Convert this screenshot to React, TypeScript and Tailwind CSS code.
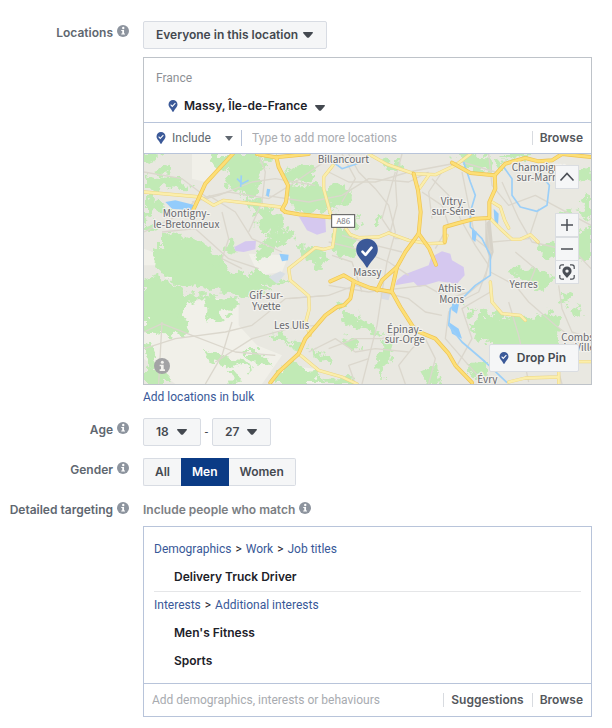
import { useState } from "react";
import type { ReactNode } from "react";

const FONT = "font-['Roboto','Liberation_Sans',sans-serif] [&_.font-semibold]:font-['Inter','Liberation_Sans',sans-serif]";

function InfoIcon() {
  return (
    <svg viewBox="0 0 24 24" className="mb-1 size-3 shrink-0" aria-hidden="true">
      <circle cx="12" cy="12" r="12" fill="#8d949e" />
      <circle cx="12.5" cy="6" r="2.4" fill="#fff" />
      <path d="M8.5 10h5.6v7H16v2H8.500v-2h2v-5h-2z" fill="#fff" />
    </svg>
  );
}

function Caret({ className = "" }: { className?: string }) {
  return (
    <svg viewBox="0 0 10 6" className={`h-1.5 w-2.5 shrink-0 ${className}`} aria-hidden="true">
      <path d="M.6 0h8.800q.6.1.5.9L6 5.400q-1 .9-2 0L.1.9Q0 .1.6 0z" fill="#444950" />
    </svg>
  );
}

function PinIcon({ className }: { className: string }) {
  return (
    <svg viewBox="0 0 22 29" className={`shrink-0 ${className}`} aria-hidden="true">
      <path
        d="M11 0a10.800 10.800 0 0 1 10.800 10.800c0 3.200-1.600 6-3.800 8.600-2.300 2.800-4.200 5.500-5.500 8.300-.7 1.400-2.300 1.400-3 0-1.300-2.800-3.200-5.500-5.500-8.300C1.800 16.800.2 14 .2 10.800A10.800 10.800 0 0 1 11 0z"
        fill="#3b5998"
      />
      <path d="M6.200 12.200l3 3.200 6.600-6.800" fill="none" stroke="#fff" strokeWidth="2.600" strokeLinecap="square" />
    </svg>
  );
}

function DropDown({ id, label, options, className }: { id: string; label?: string; options: string[]; className: string }) {
  return (
    <span className="relative inline-flex items-center">
      <select
        id={id}
        aria-label={label}
        className={`h-7 appearance-none rounded-xs border border-[#d8dce3] bg-[#f5f6f7] pl-3 text-xs font-semibold text-[#444950] ${className}`}
      >
        {options.map((o) => (
          <option key={o}>{o}</option>
        ))}
      </select>
      <Caret className="pointer-events-none absolute right-3.5" />
    </span>
  );
}

function Row({ label, htmlFor, children }: { label: string; htmlFor: string; children: ReactNode }) {
  return (
    <div className="flex gap-3.5">
      <div className="flex h-5 w-[129px] shrink-0 items-center justify-end gap-1 pt-1">
        <label htmlFor={htmlFor} className="whitespace-nowrap font-semibold text-[#606770]">
          {label}
        </label>
        <InfoIcon />
      </div>
      <div className="min-w-0 flex-1">{children}</div>
    </div>
  );
}

const WOODS = [
  "M210 6L345 6 365 40 350 80 345 120 300 130 250 105 240 70 270 55 225 50z",
  "M6 80L40 68 90 72 150 95 140 112 60 108 6 112z",
  "M6 132L40 140 60 160 120 185 90 190 40 180 6 205z",
  "M6 205L40 215 50 232 30 248 6 240z",
  "M60 255L100 240 150 262 200 285 240 310 250 345 220 360 160 345 100 325 60 290z",
  "M40 285L90 300 140 330 240 345 330 385 400 420 330 425 300 440 250 420 180 410 110 400 60 365 36 345z",
  "M6 385L50 375 90 395 150 430 230 430 300 450 270 480 230 490 235 510 190 500 190 440 140 450 125 510 60 490 6 460z",
  "M6 455L70 480 120 500 135 530 90 560 60 540 6 545z",
  "M60 540L90 560 110 520 145 530 120 555z",
  "M6 640L60 655 90 690 95 696 6 696z",
  "M6 575L20 560 50 640 20 650z",
  "M300 130L345 140 400 185 405 225 350 240 350 200z",
  "M310 6L400 6 385 24 330 22z",
  "M420 60L500 40 530 65 490 95 450 85z",
  "M440 90L470 100 540 100 565 165 530 190 480 180 440 165z",
  "M540 115L590 95 632 115 632 150 575 170z",
  "M575 225L620 235 650 290 635 320 590 315 565 275z",
  "M370 175L420 185 425 225 390 240 365 215z",
  "M390 250L450 235 470 250 420 275 380 285z",
  "M470 285L540 290 560 330 530 345 480 320z",
  "M340 305L385 260 410 270 375 315 345 325z",
  "M250 268L280 260 280 300 255 295z",
  "M370 240L440 228 440 242 380 262z",
  "M330 350L440 385 430 395 350 400 320 385z",
  "M715 25L790 30 785 52 740 55z",
  "M6 6L55 6 40 25 6 36z",
  "M40 50L80 38 90 55 60 66z",
  "M595 490L650 485 645 500 700 520 715 555 660 530 600 510z",
  "M580 450L600 440 610 470 585 475z",
  "M590 550L625 555 655 580 630 600z",
  "M500 595L530 590 570 630 560 640 520 610z",
  "M395 665L450 625 500 645 540 680 560 696 400 696z",
  "M540 675L620 672 640 696 560 696z",
  "M1080 6L1170 6 1170 18 1100 26z",
  "M990 515L1050 480 1080 490 1140 500 1190 500 1210 475 1250 500 1240 560 1250 600 1080 600 1050 575 1000 560z",
  "M1100 355L1180 345 1230 370 1200 410 1130 390z",
  "M1280 240L1347 225 1347 325 1300 330z",
  "M1310 150L1347 130 1347 200 1320 180z",
  "M1190 275L1240 275 1235 315 1200 310z",
  "M1250 180L1290 170 1300 190 1260 215z",
  "M830 660L880 635 900 690 850 696z",
  "M970 650L1030 620 1040 670 1000 680z",
  "M940 6L1040 10 1050 50 1000 62 960 45z",
  "M1060 20L1085 25 1080 60 1065 50z",
  "M1270 45L1347 50 1347 85 1310 85z",
  "M620 260L640 270 640 300 620 290z",
  "M625 200L650 195 660 215 640 225z",
  "M1250 430L1290 415 1300 440 1265 455z",
  "M1290 470L1310 450 1320 480 1300 500z",
  "M300 600L350 600 390 640 350 635z",
  "M180 600L240 605 330 635 340 650 270 640 200 625z",
  "M450 565L485 570 480 590 450 585z",
  "M720 560L760 550 750 600 735 640 720 690 710 640z",
  "M1020 480L1035 470 1050 490 1020 500z",
  "M395 540L450 560 440 575 400 560z",
  "M970 460L1000 470 985 490z",
  "M690 195L705 190 720 210 700 225z",
  "M250 660L290 665 300 685 270 696z",
];

const FIELDS = [
  "M150 6L300 6 190 90 150 80z",
  "M6 290L60 310 50 340 6 340z",
  "M320 305L440 310 420 360 350 370z",
  "M6 470L200 440 290 440 290 520 345 580 420 610 360 696 100 696 6 620z",
  "M60 340L130 350 110 380 70 380z",
  "M420 640L520 650 540 696 400 690z",
];

const MINOR = [
  "M6 240L90 200 170 140 260 120 380 140 460 90 560 20",
  "M150 150L230 130 330 90 400 80 520 100",
  "M200 130L280 180 330 260 420 300",
  "M60 240L160 230 260 320 350 350",
  "M6 60L120 80 200 140",
  "M350 6L370 60 360 150 320 240",
  "M240 180L260 260 240 320 300 350",
  "M370 130L500 150 600 130 680 80 800 90 860 60",
  "M620 6L650 60 700 110 740 160 760 240 735 330 720 420 705 520 660 696",
  "M560 60L620 90 700 90 800 60",
  "M600 6L640 80 600 150",
  "M760 60L740 130 720 200 760 260 800 260",
  "M780 6L760 80 765 160 745 240",
  "M700 20L800 60 960 30 1060 60",
  "M870 80L920 130 960 210 1000 280 1040 340 1010 420 950 450",
  "M840 120L900 160 920 220 880 290",
  "M960 60L980 160 1000 260 1050 300",
  "M1030 200L1045 300 1030 380 960 440 920 480 910 560 980 640 1030 696",
  "M1040 6L1050 100 1100 160 1180 130 1347 220",
  "M1080 90L1130 200 1170 270 1300 300 1347 350",
  "M1190 170L1160 260 1050 270",
  "M1045 360L1120 400 1160 450 1240 520 1347 600",
  "M1045 420L960 470 990 560 940 650",
  "M560 400L680 420 850 400 920 440 980 420",
  "M720 420L800 440 850 480 900 490",
  "M440 440L560 430 640 400 720 420",
  "M6 590L100 560 250 540 330 520 430 440 560 430",
  "M60 510L50 696",
  "M6 540L60 515 150 550 280 600 400 610",
  "M220 630L330 560 440 530 520 520",
  "M190 696L240 610 270 510",
  "M560 590L640 560 720 560 820 520",
  "M500 600L580 560 640 600 700 590 800 600",
  "M790 696L770 640 810 590 850 550",
  "M640 696L620 640 680 620",
  "M850 560L880 620 860 696",
  "M560 270L640 290 740 330 800 370",
  "M570 310L630 330 660 420",
  "M600 250L700 280 780 300",
  "M1100 450L1130 550 1160 690",
  "M1250 400L1260 470 1290 540 1347 560",
  "M900 60L860 120 870 200",
  "M1120 300L1180 350 1160 400",
  "M1250 660L1260 696",
];

const YELLOW = [
  "M6 120L175 135 215 160 245 145 415 165 430 178",
  "M573 40L545 75 545 110 568 195",
  "M580 225L572 285 545 292 520 287 440 350 445 385 500 432 502 470 490 515 505 550",
  "M612 230L625 248 650 257 710 255 740 243",
  "M680 6L735 37 815 65 880 68 940 40 985 6",
  "M860 70L832 110",
  "M740 243L800 265 860 275 908 273 915 250",
  "M1047 148L1075 165 1088 205 1100 228",
  "M1045 200L1075 230 1110 262 1135 262 1165 248 1188 270",
  "M1045 390L1050 450 1080 485 1135 490 1150 505",
  "M470 605L530 655 600 675 645 696",
  "M1100 690L1150 678 1250 675M1250 696L1250 655M1310 629H1347",
];

const ORANGE = [
  "M272 6L190 95 165 150 150 182",
  "M345 6L400 16 500 6M403 16L410 45 438 100 432 150 420 172 430 180",
  "M430 180L470 187 565 196",
  "M815 65L828 115 836 180 830 245 790 300 765 345 720 385 705 415",
  "M830 245L862 290 882 338",
  "M765 345L748 420",
  "M565 388L605 370 640 390 685 408 750 420 775 465 820 535 880 560 920 605 940 640 990 692",
  "M635 390L625 440 605 460 585 465 550 490 490 560 470 605 410 660 385 692",
  "M908 270L908 225 950 213 1000 200 1042 198",
  "M930 32L985 63 1058 70 1090 35 1150 18 1190 28 1230 25 1260 6 1347 15",
  "M1058 70L1060 110 1042 150 1042 195",
];

const WATER = [
  "M70 150L100 145 160 160 145 175 90 170z",
  "M412 305L440 308 438 325 420 328z",
  "M1055 170L1070 185 1068 220 1058 215z",
  "M930 450L955 435 945 485 930 475z",
  "M920 510L950 530 960 560 930 545z",
  "M375 110L385 112 380 135 372 130z",
  "M990 230L1005 240 1000 270 990 262z",
];

const STREAMS = [
  "M965 30L985 90 1000 130 985 180 985 225 1020 260 1045 310 1045 370 1000 400 970 430 925 470 920 520 960 570 1030 630 1095 692",
  "M1085 45L1110 80 1110 130 1135 165 1185 178 1215 160 1222 100 1190 60",
  "M573 30L600 50 660 30",
  "M285 80L300 95 320 85M298 70L296 105",
];

const LABELS: { x: number; y: number; lines: string[] }[] = [
  { x: 604, y: 32, lines: ["Billancourt"] },
  { x: 133, y: 196, lines: ["Montigny-", "le-Bretonneux"] },
  { x: 934, y: 158, lines: ["Vitry-", "sur-Seine"] },
  { x: 1194, y: 56, lines: ["Champigny-", "sur-Marne"] },
  { x: 676, y: 371, lines: ["Massy"] },
  { x: 929, y: 421, lines: ["Athis-", "Mons"] },
  { x: 1145, y: 407, lines: ["Yerres"] },
  { x: 373, y: 442, lines: ["Gif-sur-", "Yvette"] },
  { x: 449, y: 530, lines: ["Les Ulis"] },
  { x: 788, y: 542, lines: ["Épinay-", "sur-Orge"] },
  { x: 1036, y: 694, lines: ["Évry"] },
  { x: 1312, y: 566, lines: ["Combs-", "la-Ville"] },
];

function MapDrawing() {
  return (
    <svg
      viewBox="6 6 1341 690"
      preserveAspectRatio="xMidYMid slice"
      className="block h-[230px] w-full bg-[#e9e8e1]"
      role="img"
      aria-label="Map of the area around Massy"
    >
      <defs>
        <filter id="coast" x="-5%" y="-5%" width="110%" height="110%">
          <feTurbulence type="fractalNoise" baseFrequency="0.035" numOctaves="4" seed="4" />
          <feDisplacementMap in="SourceGraphic" scale="55" xChannelSelector="R" yChannelSelector="G" />
        </filter>
      </defs>
      <g fill="#f1f0e9">
        {FIELDS.map((d) => (
          <path key={d} d={d} />
        ))}
      </g>
      <g fill="#c1eab5" filter="url(#coast)">
        {WOODS.map((d) => (
          <path key={d} d={d} />
        ))}
      </g>
      <g fill="#d5c8ef">
        <path d="M765 385L785 368 860 340 868 315 900 298 925 305 930 325 965 345 968 370 945 395 890 388 830 405 815 390 760 400z" />
        <path d="M470 193L550 197 552 240 525 248 495 235z" />
        <path d="M277 285L310 268 342 266 340 292 305 300 280 297z" />
      </g>
      <path d="M715 423L745 423 740 445 718 440z" fill="#d9dce3" />
      <path d="M380 375L415 358 430 365 405 395z" fill="#d9dfe4" />
      <path d="M1030 215L1045 200 1055 300 1045 330 1030 280z" fill="#d6d2c8" />
      <g fill="none" stroke="#dbd7cd" strokeWidth="4" strokeLinejoin="round">
        {MINOR.map((d) => (
          <path key={d} d={d} />
        ))}
      </g>
      <g fill="#93ccfb">
        {WATER.map((d) => (
          <path key={d} d={d} />
        ))}
      </g>
      <g fill="none" stroke="#9bcff8" strokeWidth="5" strokeLinejoin="round">
        {STREAMS.map((d) => (
          <path key={d} d={d} />
        ))}
      </g>
      <g fill="none" strokeLinejoin="round" strokeLinecap="round">
        <g stroke="#ecd582" strokeWidth="10">
          {YELLOW.map((d) => (
            <path key={d} d={d} />
          ))}
        </g>
        <g stroke="#fbeeab" strokeWidth="7">
          {YELLOW.map((d) => (
            <path key={d} d={d} />
          ))}
        </g>
        <g stroke="#efc452" strokeWidth="12">
          {ORANGE.map((d) => (
            <path key={d} d={d} />
          ))}
        </g>
        <g stroke="#fddf76" strokeWidth="8">
          {ORANGE.map((d) => (
            <path key={d} d={d} />
          ))}
        </g>
      </g>
      <rect x="569" y="188" width="69" height="38" fill="#fff" stroke="#555" strokeWidth="3" />
      <g
        fontFamily="'Noto Sans CJK SC', 'Open Sans', sans-serif"
        textAnchor="middle"
        fill="#66676c"
        stroke="#f3f2ee"
        strokeWidth="7"
        strokeLinejoin="round"
        paintOrder="stroke"
      >
        <text x="604" y="216" fontSize="24" fill="#77787c" strokeWidth="0">
          A86
        </text>
        {LABELS.map((l) => (
          <text key={l.lines[0]} y={l.y} fontSize="30">
            {l.lines.map((line, i) => (
              <tspan key={line} x={l.x} dy={i * 32}>
                {line}
              </tspan>
            ))}
          </text>
        ))}
      </g>
      <g transform="translate(642 260) scale(3)">
        <path
          d="M11 0a10.800 10.800 0 0 1 10.800 10.800c0 4-2 7-4.800 10.200-2.500 2.900-4.200 5-5.200 7.400-.4.800-1.200.8-1.600 0-1-2.400-2.700-4.500-5.200-7.400C2.200 17.800.2 14.800.2 10.800A10.800 10.800 0 0 1 11 0z"
          fill="#3b5998"
        />
        <path d="M6.500 13l3 3.200 6-7.200" fill="none" stroke="#fff" strokeWidth="2.600" strokeLinecap="round" strokeLinejoin="round" />
      </g>
      <g>
        <circle cx="60" cy="642" r="24" fill="#a3a3a5" />
        <circle cx="61" cy="631" r="4.500" fill="#f3f2ee" />
        <path d="M53 638h12v14h4v5H53v-5h4v-9h-4z" fill="#f3f2ee" />
      </g>
    </svg>
  );
}

const MAP_BUTTON =
  "flex size-6 items-center justify-center border border-[#dadde1] bg-[#f5f6f7] text-[#4b4f56]";

function MapPanel() {
  return (
    <div className="relative">
      <MapDrawing />
      <div className="absolute top-[11px] right-3 flex flex-col">
        <button type="button" aria-label="Collapse map" className={MAP_BUTTON}>
          <svg viewBox="0 0 16 16" className="size-4" aria-hidden="true">
            <path d="M1.500 11.500L8 4.500l6.500 7" fill="none" stroke="currentColor" strokeWidth="1.600" />
          </svg>
        </button>
        <button type="button" aria-label="Zoom in" className={`mt-6 ${MAP_BUTTON}`}>
          <svg viewBox="0 0 12 12" className="size-3" aria-hidden="true">
            <path d="M0 6h12M6 0v12" fill="none" stroke="currentColor" strokeWidth="1.500" />
          </svg>
        </button>
        <button type="button" aria-label="Zoom out" className={MAP_BUTTON}>
          <svg viewBox="0 0 12 12" className="size-3" aria-hidden="true">
            <path d="M0 6h12" fill="none" stroke="currentColor" strokeWidth="1.500" />
          </svg>
        </button>
        <button type="button" aria-label="Centre map" className={`-mt-px ${MAP_BUTTON}`}>
          <svg viewBox="0 0 16 16" className="size-4 shrink-0" aria-hidden="true">
            <path
              d="M.8 5V3Q.8.8 3 .8h2M11 .8h2q2.200 0 2.200 2.200v2M15.200 11v2q0 2.200-2.200 2.200h-2M5 15.200H3Q.8 15.200.8 13v-2"
              fill="none"
              stroke="currentColor"
              strokeWidth="1.200"
            />
            <path
              d="M8 2.400a4.600 4.600 0 0 1 4.600 4.600c0 2.800-2.600 4.400-4.600 7-2-2.600-4.600-4.200-4.600-7A4.600 4.600 0 0 1 8 2.400zm0 3a1.700 1.700 0 1 0 0 3.400 1.700 1.700 0 0 0 0-3.400z"
              fill="currentColor"
              fillRule="evenodd"
            />
          </svg>
        </button>
      </div>
      <button
        type="button"
        className="absolute right-3 bottom-3 flex h-7 items-center gap-2 rounded-xs border border-[#dadde1] bg-[#f5f6f7] pr-3 pl-[9px] text-xs font-semibold text-[#444950]"
      >
        <PinIcon className="h-3 w-2.5" />
        Drop Pin
      </button>
    </div>
  );
}

function Gender() {
  const [value, setValue] = useState("Men");
  const base = "relative flex cursor-pointer items-center border-y px-[11px]";
  return (
    <fieldset aria-label="Gender" className="flex h-7 font-semibold">
      {["All", "Men", "Women"].map((g) => (
        <label
          key={g}
          className={`${base} ${
            value === g ? "border-[#0b3b85] bg-[#0b3b85] text-white" : "border-[#d8dce3] bg-[#f5f6f7] text-[#444950]"
          } first-of-type:rounded-l-xs first-of-type:border-l last-of-type:rounded-r-xs last-of-type:border-r`}
        >
          <input
            type="radio"
            name="gender"
            id={g === "All" ? "gender" : undefined}
            checked={value === g}
            onChange={() => setValue(g)}
            className="sr-only"
          />
          {g}
        </label>
      ))}
    </fieldset>
  );
}

function Crumbs({ items }: { items: string[] }) {
  return (
    <div className="flex h-7 items-center gap-1 text-[#1d2129]">
      {items.map((item, i) => (
        <span key={item} className="flex gap-1">
          {i > 0 && <span>&gt;</span>}
          <a href="#" className="text-[#385898]">
            {item}
          </a>
        </span>
      ))}
    </div>
  );
}

export default function App() {
  return (
    <main className={`flex min-h-screen flex-col bg-white pt-[21px] pr-5 pb-3 text-xs ${FONT}`}>
      <Row label="Locations" htmlFor="scope">
        <DropDown id="scope" options={["Everyone in this location"]} className="w-[184px]" />
        <div className="mt-2 border border-[#bec3c9]">
          <div className="flex h-[65px] flex-col border-b border-[#b8c4da] pl-3">
            <span className="pt-3 leading-4 text-[#8d9095]">France</span>
            <div className="flex items-center pt-3 pl-3 leading-4">
              <PinIcon className="h-3 w-2.5" />
              <span className="pl-1.5 font-semibold text-[#1d2129]">Massy, Île-de-France</span>
              <button type="button" aria-label="Location options" className="pt-1 pl-2">
                <Caret />
              </button>
            </div>
          </div>
          <div className="flex h-[31px] items-center border-b border-[#b8c4da] pl-3">
            <PinIcon className="h-3 w-2.5" />
            <span className="relative flex items-center">
              <select aria-label="Include or exclude" className="w-[67px] appearance-none pl-1.5 text-[#606770]">
                <option>Include</option>
                <option>Exclude</option>
              </select>
              <svg viewBox="0 0 8 5" className="pointer-events-none absolute right-0 h-[5px] w-2" aria-hidden="true">
                <path d="M0 0h8L4 5z" fill="#606770" />
              </svg>
            </span>
            <input
              type="text"
              aria-label="Type to add more locations"
              placeholder="Type to add more locations"
              className="ml-2 h-4 min-w-0 flex-1 border-l border-[#b8c4da] pl-2.5 outline-none placeholder:text-[#a8abb0]"
            />
            <button type="button" className="h-3.5 border-l border-[#d8dbe0] pr-2 pl-[7px] leading-3 font-semibold text-[#54575c]">
              Browse
            </button>
          </div>
          <MapPanel />
        </div>
        <a href="#" className="mt-1 mb-3 block leading-[17px] text-[#385898]">
          Add locations in bulk
        </a>
      </Row>

      <Row label="Age" htmlFor="age-min">
        <div className="flex items-center gap-[3px] text-[#444950]">
          <DropDown id="age-min" options={["18"]} className="w-[58px]" />
          <span className="w-[5px] text-center">-</span>
          <DropDown id="age-max" label="Maximum age" options={["27"]} className="w-[59px]" />
        </div>
      </Row>

      <div className="mt-3">
        <Row label="Gender" htmlFor="gender">
          <Gender />
        </Row>
      </div>

      <div className="mt-3">
        <Row label="Detailed targeting" htmlFor="targeting">
          <div className="flex h-5 items-center gap-1 pt-1 font-semibold text-[#7b7e83]">
            Include people who match <InfoIcon />
          </div>
          <div className="mt-2 border border-[#b8c4da]">
            <div className="px-2.5 pt-2 pb-2 text-[#1d2129]">
              <Crumbs items={["Demographics", "Work", "Job titles"]} />
              <p className="flex h-7 items-center pl-5 font-semibold">Delivery Truck Driver</p>
              <hr className="-mb-px border-[#e5e6e8]" />
              <Crumbs items={["Interests", "Additional interests"]} />
              <p className="flex h-7 items-center pl-5 font-semibold">Men&apos;s Fitness</p>
              <p className="flex h-7 items-center pl-5 font-semibold">Sports</p>
            </div>
            <div className="flex h-[33px] items-center border-t border-[#b8c4da] pl-2 text-[#54575c]">
              <input
                id="targeting"
                type="text"
                placeholder="Add demographics, interests or behaviours"
                className="min-w-0 flex-1 outline-none placeholder:text-[#a8abb0]"
              />
              <button type="button" className="h-3.5 border-l border-[#d8dbe0] pr-2 pl-[7px] leading-3 font-semibold">
                Suggestions
              </button>
              <button type="button" className="h-3.5 border-l border-[#d8dbe0] pr-2 pl-[7px] leading-3 font-semibold">
                Browse
              </button>
            </div>
          </div>
        </Row>
      </div>
    </main>
  );
}
